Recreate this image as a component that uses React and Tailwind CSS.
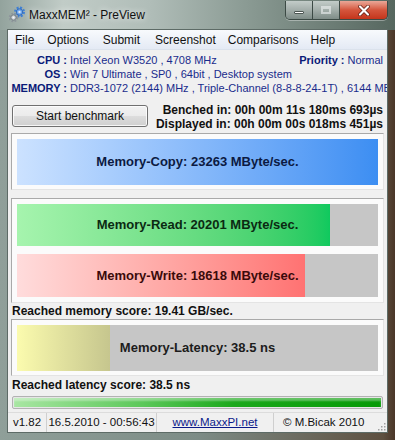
function GearIcon() {
  return (
    <svg width="18" height="17" viewBox="0 0 18 17">
      <circle cx="11.5" cy="6" r="4.2" fill="none" stroke="#3d7fd6" strokeWidth="2.6" strokeDasharray="1.9 1.4" />
      <circle cx="11.5" cy="6" r="3.2" fill="#6ea6ea" stroke="#2a5fae" strokeWidth="0.8" />
      <circle cx="11.5" cy="6" r="1.2" fill="#dde9f8" />
      <circle cx="5.5" cy="11.5" r="3.6" fill="none" stroke="#8e969c" strokeWidth="2.4" strokeDasharray="1.6 1.3" />
      <circle cx="5.5" cy="11.5" r="2.6" fill="#c9cfd3" stroke="#6d757b" strokeWidth="0.8" />
      <circle cx="5.5" cy="11.5" r="1" fill="#f4f6f7" />
    </svg>
  );
}

function CaptionButtons() {
  return (
    <div className="ml-auto mr-[7px] mt-px flex h-[19px] rounded-b-[5px] border border-t-0 border-[#3c4a45] overflow-hidden shadow-[0_1px_0_rgba(255,255,255,0.35)]">
      <div className="w-[27px] flex items-center justify-center border-r border-[#3c4a45] bg-gradient-to-b from-[#c3ccc9] via-[#a3aeaa] to-[#7f8d88]">
        <div className="w-[10px] h-[3px] mt-[5px] bg-white border border-[#4c5652] rounded-[1px]" />
      </div>
      <div className="w-[27px] flex items-center justify-center border-r border-[#3c4a45] bg-gradient-to-b from-[#c3ccc9] via-[#a3aeaa] to-[#7f8d88]">
        <div className="w-[10px] h-[8px] border-2 border-t-[3px] border-[#eef2f1] opacity-60" />
      </div>
      <div className="w-[47px] flex items-center justify-center bg-gradient-to-b from-[#e9a798] via-[#d4553c] to-[#c4341a]">
        <svg width="12" height="11" viewBox="0 0 12 11">
          <path d="M2 1.5 L10 9.5 M10 1.5 L2 9.5" stroke="#5a1a10" strokeWidth="3.6" strokeLinecap="round" />
          <path d="M2 1.5 L10 9.5 M10 1.5 L2 9.5" stroke="#ffffff" strokeWidth="2.2" strokeLinecap="round" />
        </svg>
      </div>
    </div>
  );
}

function Bar({ label, fill, fillClass, textClass, height }) {
  return (
    <div className={`grid ${height}`}>
      <div className="col-start-1 row-start-1 flex bg-[#c6c6c6]">
        <div className={`h-full ${fillClass}`} style={{ width: fill }} />
      </div>
      <div className={`col-start-1 row-start-1 flex items-center justify-center font-bold text-[13px] ${textClass}`}>
        {label}
      </div>
    </div>
  );
}

export default function App() {
  return (
    <div className="w-[395px] h-[440px] flex flex-col overflow-hidden font-['Liberation_Sans',Arial,sans-serif] bg-[linear-gradient(90deg,#8f9f99_0%,#7d8c86_50%,#5e5040_97%,#4a3628_100%)]">
      {/* title bar */}
      <div className="h-[30px] flex items-start shrink-0 bg-[linear-gradient(90deg,#93a39d_0%,#c1ccc7_16%,#b0bdb8_38%,#8b9b94_62%,#56675f_100%)]">
        <div className="ml-[8px] mt-[6px]">
          <GearIcon />
        </div>
        <div className="ml-[3px] mt-[7px] leading-[16px] text-[12px] text-[#111] [text-shadow:0_0_6px_rgba(255,255,255,0.95)]">
          MaxxMEM² - PreView
        </div>
        <CaptionButtons />
      </div>

      {/* client */}
      <div className="mx-[8px] flex flex-col bg-[#f0f0f0] h-[402px] shrink-0 shadow-[0_0_0_1px_#5d6b66]">
        {/* menu */}
        <div className="h-[20px] flex items-center text-[12px] text-[#111] bg-gradient-to-b from-[#f8fafd] to-[#e4eaf4] border-b border-[#dbe2ec]">
          <span className="ml-[7px]">File</span>
          <span className="ml-[13px]">Options</span>
          <span className="ml-[14px]">Submit</span>
          <span className="ml-[15px]">Screenshot</span>
          <span className="ml-[12px]">Comparisons</span>
          <span className="ml-[12px]">Help</span>
        </div>

        {/* system info */}
        <div className="pt-[3px] text-[11px] leading-[14px] text-[#1a2c8c]">
          <div className="h-[14px] flex whitespace-nowrap">
            <span className="w-[59px] text-right font-bold text-[#0a1a78]">CPU :</span>
            <span className="ml-[3px]">Intel Xeon W3520 , 4708 MHz</span>
            <span className="ml-auto mr-[4px]">
              <span className="font-bold text-[#0a1a78]">Priority : </span>Normal
            </span>
          </div>
          <div className="h-[14px] flex whitespace-nowrap">
            <span className="w-[59px] text-right font-bold text-[#0a1a78]">OS :</span>
            <span className="ml-[3px]">Win 7 Ultimate , SP0 , 64bit , Desktop system</span>
          </div>
          <div className="h-[14px] flex whitespace-nowrap overflow-hidden">
            <span className="w-[59px] shrink-0 text-right font-bold text-[#0a1a78]">MEMORY :</span>
            <span className="ml-[3px]">DDR3-1072 (2144) MHz , Triple-Channel (8-8-8-24-1T) , 6144 MByte</span>
          </div>
        </div>

        {/* benchmark row */}
        <div className="mt-[8px] h-[28px] flex items-start">
          <button className="ml-[4px] mt-[2px] w-[136px] h-[22px] rounded-[3px] border border-[#707070] text-[12px] text-[#111] bg-[linear-gradient(180deg,#f2f2f2_0%,#ebebeb_50%,#dddddd_51%,#cfcfcf_100%)] shadow-[inset_0_0_0_1px_rgba(255,255,255,0.8)]">
            Start benchmark
          </button>
          <div className="ml-auto mr-[4px] text-right font-bold text-[12px] leading-[14px] text-[#111]">
            <div>Benched in: 00h 00m 11s 180ms 693µs</div>
            <div>Displayed in: 00h 00m 00s 018ms 451µs</div>
          </div>
        </div>

        {/* memory copy */}
        <div className="mt-[2px] ml-[3px] w-[373px] border border-[#a9a9a9] border-r-[#e4e4e4] border-b-[#e4e4e4] bg-[#fbfbfb] px-[5px] pt-[5px] pb-[4px]">
          <Bar
            label="Memory-Copy: 23263 MByte/sec."
            fill="100%"
            height="h-[46px]"
            fillClass="bg-gradient-to-r from-[#cce2ff] to-[#3c8ef2]"
            textClass="text-[#0c1a42]"
          />
        </div>

        {/* memory read/write */}
        <div className="mt-[8px] ml-[3px] w-[373px] border border-[#a9a9a9] border-r-[#e4e4e4] border-b-[#e4e4e4] bg-[#fbfbfb] px-[5px] py-[5px] flex flex-col gap-[8px]">
          <Bar
            label="Memory-Read: 20201 MByte/sec."
            fill="313px"
            height="h-[42px]"
            fillClass="bg-gradient-to-r from-[#a6f4ae] to-[#0fc95e]"
            textClass="text-[#0b2a12]"
          />
          <Bar
            label="Memory-Write: 18618 MByte/sec."
            fill="288px"
            height="h-[43px]"
            fillClass="bg-gradient-to-r from-[#ffdcdc] to-[#ff7272]"
            textClass="text-[#3a0a0a]"
          />
        </div>

        <div className="h-[16px] leading-[16px] pl-[4px] font-bold text-[12px] text-[#111]">
          Reached memory score: 19.41 GB/sec.
        </div>

        {/* latency */}
        <div className="ml-[3px] w-[373px] border border-[#a9a9a9] border-r-[#e4e4e4] border-b-[#e4e4e4] bg-[#fbfbfb] px-[5px] pt-[5px] pb-[4px]">
          <Bar
            label="Memory-Latency: 38.5 ns"
            fill="93px"
            height="h-[46px]"
            fillClass="bg-gradient-to-r from-[#fbfbae] to-[#c6c68e]"
            textClass="text-[#1c1c1c]"
          />
        </div>

        <div className="h-[18px] leading-[18px] pl-[4px] font-bold text-[12px] text-[#111]">
          Reached latency score: 38.5 ns
        </div>

        {/* progress */}
        <div className="mt-[2px] ml-[4px] w-[371px] h-[13px] rounded-[2px] border border-[#b2b2b2] bg-[#e6e6e6] p-px">
          <div className="h-full w-full bg-[linear-gradient(90deg,#a8e6a2_0%,#5cc85a_35%,#1aa81a_60%,#069a06_100%)] shadow-[inset_0_3px_2px_rgba(255,255,255,0.35)]" />
        </div>

        {/* status bar */}
        <div className="mt-[3px] h-[20px] flex items-center text-[11.5px] text-[#111] border-t border-[#dcdcdc] whitespace-nowrap">
          <div className="w-[39px] h-full flex items-center justify-center border-r border-[#cfcfcf]">v1.82</div>
          <div className="w-[110px] h-full flex items-center justify-center border-r border-[#cfcfcf]">16.5.2010 - 00:56:43</div>
          <div className="w-[117px] h-full flex items-center justify-center border-r border-[#cfcfcf]">
            <span className="underline text-[#0a1a8a]">www.MaxxPI.net</span>
          </div>
          <div className="flex-1 h-full flex items-center">
            <span className="ml-[9px]">© M.Bicak 2010</span>
            <svg className="ml-auto mr-px self-end mb-px" width="10" height="10" viewBox="0 0 10 10">
              <g fill="#a0a0a0">
                <rect x="8" y="2" width="1.5" height="1.5" />
                <rect x="5" y="5" width="1.5" height="1.5" />
                <rect x="8" y="5" width="1.5" height="1.5" />
                <rect x="2" y="8" width="1.5" height="1.5" />
                <rect x="5" y="8" width="1.5" height="1.5" />
                <rect x="8" y="8" width="1.5" height="1.5" />
              </g>
            </svg>
          </div>
        </div>
      </div>
    </div>
  );
}
